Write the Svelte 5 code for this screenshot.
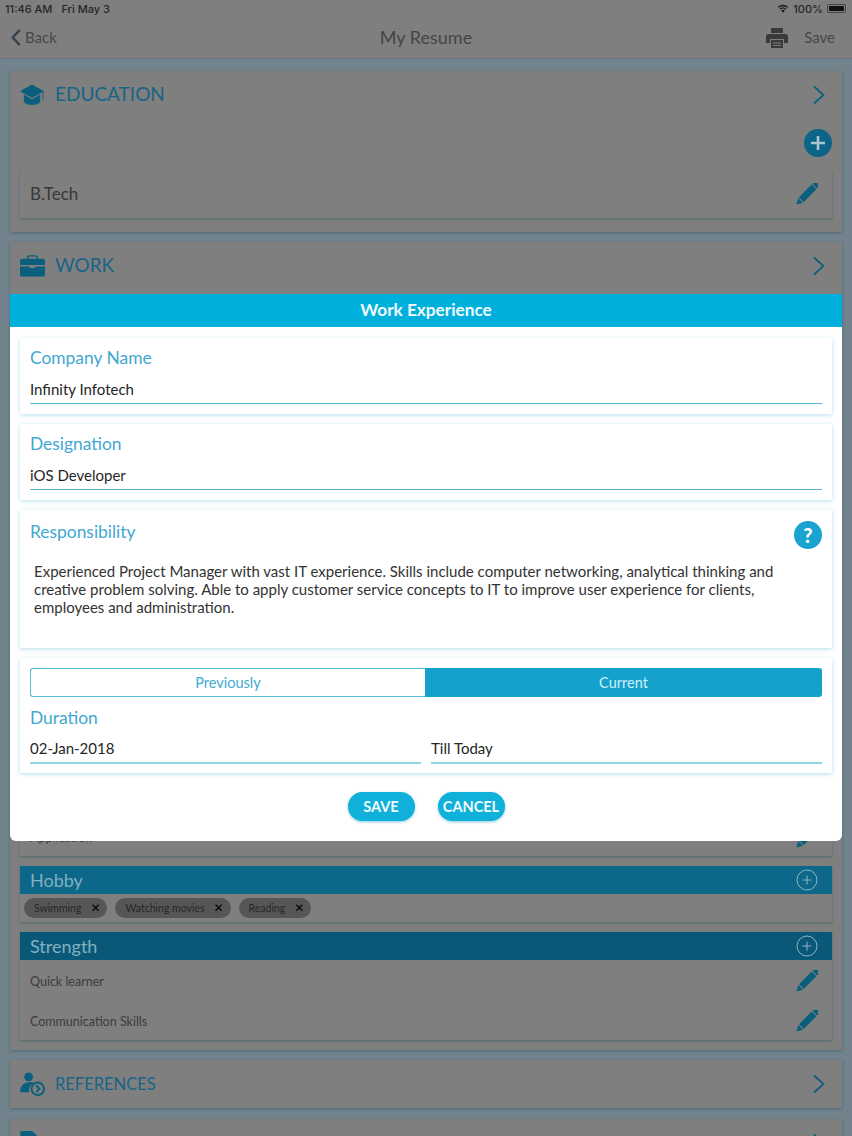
<script>
  const hobbies = ['Swimming', 'Watching movies', 'Reading'];
  const strengths = ['Quick learner', 'Communication Skills'];
</script>

{#snippet pencil()}
  <svg class="pencil" viewBox="0 0 22 22" aria-hidden="true">
    <g transform="rotate(45 11 11)" fill="currentColor">
      <rect x="7.6" y="-4" width="6.8" height="4" rx="1.2" />
      <rect x="7.6" y="1" width="6.8" height="18" />
      <polygon points="7.6,20 14.4,20 11,26" />
    </g>
  </svg>
{/snippet}

{#snippet chevron()}
  <svg class="chev" viewBox="0 0 14 20" aria-hidden="true">
    <path d="M2 1.5 L11.5 10 L2 18.5" fill="none" stroke="currentColor" stroke-width="1.7" />
  </svg>
{/snippet}

{#snippet ringPlus()}
  <svg class="ringplus" viewBox="0 0 22 22" aria-hidden="true">
    <circle cx="11" cy="11" r="10" fill="none" stroke="currentColor" stroke-width="1" />
    <path d="M11 6.5v9M6.5 11h9" stroke="currentColor" stroke-width="1" />
  </svg>
{/snippet}

<div class="screen">
  <div class="backdrop">
    <header class="top">
      <div class="status">
        <span class="clock">11:46 AM</span><span>Fri May 3</span>
        <span class="status-right">
          <svg class="wifi" viewBox="0 0 14 10" aria-hidden="true">
            <path d="M7 10 L4.9 7.5 A3.2 3.2 0 0 1 9.1 7.5 Z" fill="currentColor" />
            <path d="M3.4 5.9 A5.4 5.4 0 0 1 10.6 5.9" fill="none" stroke="currentColor" stroke-width="1.5" />
            <path d="M1.4 3.7 A8.2 8.2 0 0 1 12.6 3.7" fill="none" stroke="currentColor" stroke-width="1.5" />
          </svg>
          <span>100%</span>
          <span class="battery"><i></i></span>
        </span>
      </div>
      <nav class="nav">
        <div class="back">
          <svg viewBox="0 0 12 20" aria-hidden="true">
            <path d="M10 2 L2.5 10 L10 18" fill="none" stroke="currentColor" stroke-width="2.4" />
          </svg>
          <span>Back</span>
        </div>
        <div class="title">My Resume</div>
        <div class="actions">
          <svg class="printer" viewBox="0 0 22 21" aria-hidden="true">
            <path fill="currentColor" d="M5 1h12v5H5zM2.5 7h17A2.5 2.5 0 0 1 22 9.5V16h-4v-4H4v4H0V9.5A2.5 2.5 0 0 1 2.5 7z" />
            <path fill="currentColor" d="M5 13h12v8H5z" />
            <path d="M7 16h8M7 18.4h8" stroke="#7f7f7f" stroke-width="1" />
          </svg>
          <span>Save</span>
        </div>
      </nav>
    </header>

    <main class="list">
      <section class="panel edu">
        <div class="panel-head">
          <svg class="sec-icon" viewBox="0 0 26 22" aria-hidden="true">
            <polygon points="12.5,0 25,7 12.5,14 0,7" fill="currentColor" />
            <path d="M4 10.5 L12.5 15.5 L21 10.5 V18 C18 22.5 7 22.5 4 18 Z" fill="currentColor" />
            <path d="M24 8 V16" stroke="currentColor" stroke-width="1" />
          </svg>
          <h2>EDUCATION</h2>
          {@render chevron()}
        </div>
        <div class="add-row">
          <svg class="add" viewBox="0 0 28 28" aria-hidden="true">
            <circle cx="14" cy="14" r="14" fill="#0c6586" />
            <path d="M14 7v14M7 14h14" stroke="#a9c4cf" stroke-width="2.6" />
          </svg>
        </div>
        <div class="row-card">
          <span class="btech">B.Tech</span>
          {@render pencil()}
        </div>
      </section>

      <section class="panel work">
        <div class="panel-head">
          <svg class="sec-icon" viewBox="0 0 26 22" aria-hidden="true">
            <path d="M8 4V2.2C8 1 9 .5 10 .5h6c1 0 2 .5 2 1.7V4" fill="none" stroke="currentColor" stroke-width="1.4" />
            <path d="M2 3.5h22a2 2 0 0 1 2 2V10H0V5.500a2 2 0 0 1 2-2z" fill="currentColor" />
            <path d="M0 11.500h10v1.500h6v-1.500h10V20a2 2 0 0 1-2 2H2a2 2 0 0 1-2-2z" fill="currentColor" />
          </svg>
          <h2>WORK</h2>
          {@render chevron()}
        </div>

        <div class="tag-card hidden-row">
          <div class="row"><span>Application</span>{@render pencil()}</div>
        </div>

        <div class="tag-card">
          <div class="strip hobby"><span>Hobby</span>{@render ringPlus()}</div>
          <div class="chips">
            {#each hobbies as hobby}
              <span class="chip">{hobby}<b aria-hidden="true">✕</b></span>
            {/each}
          </div>
        </div>

        <div class="tag-card">
          <div class="strip strength"><span>Strength</span>{@render ringPlus()}</div>
          {#each strengths as item}
            <div class="row"><span>{item}</span>{@render pencil()}</div>
          {/each}
        </div>
      </section>

      <section class="panel refs">
        <div class="panel-head">
          <svg class="sec-icon person" viewBox="0 0 26 26" aria-hidden="true">
            <circle cx="9" cy="5" r="4.6" fill="currentColor" />
            <path d="M0 21C0 14 5 10.500 10 10.500c2 0 3.500.5 5 1.300C11 13 9 17 9.500 21z" fill="currentColor" />
            <circle cx="18.500" cy="17.500" r="6.500" fill="none" stroke="currentColor" stroke-width="2" />
            <path d="M16.800 14l3.500 3.500-3.500 3.500" fill="none" stroke="currentColor" stroke-width="2" />
          </svg>
          <h2 class="small">REFERENCES</h2>
          {@render chevron()}
        </div>
      </section>

      <section class="panel decl">
        <div class="panel-head">
          <svg class="sec-icon doc" viewBox="0 0 20 26" aria-hidden="true">
            <path d="M0 0h13l7 7v19H0z" fill="currentColor" />
          </svg>
          <h2 class="small">DECLARATION</h2>
          {@render chevron()}
        </div>
      </section>
    </main>
  </div>

  <div class="modal" role="dialog" aria-label="Work Experience">
    <div class="modal-head">Work Experience</div>
    <div class="modal-body">
      <div class="field-card">
        <label class="lbl" for="company">Company Name</label>
        <div id="company" class="value">Infinity Infotech</div>
      </div>
      <div class="field-card">
        <label class="lbl" for="designation">Designation</label>
        <div id="designation" class="value">iOS Developer</div>
      </div>
      <div class="field-card resp">
        <div class="resp-head">
          <span class="lbl">Responsibility</span>
          <span class="help">?</span>
        </div>
        <p>Experienced Project Manager with vast IT experience. Skills include computer networking, analytical thinking and creative problem solving. Able to apply customer service concepts to IT to improve user experience for clients, employees and administration.</p>
      </div>
      <div class="field-card duration">
        <div class="segment">
          <span class="seg-off">Previously</span>
          <span class="seg-on">Current</span>
        </div>
        <div class="lbl dur-label">Duration</div>
        <div class="dates">
          <div class="value thick">02-Jan-2018</div>
          <div class="value thick">Till Today</div>
        </div>
      </div>
    </div>
    <div class="buttons">
      <button type="button">SAVE</button>
      <button type="button">CANCEL</button>
    </div>
  </div>
</div>

<style>
  :global(body) {
    margin: 0;
    background: #6f7f88;
  }
  .screen {
    position: relative;
    width: 852px;
    height: 1136px;
    overflow: hidden;
    font-family: Lato, "Open Sans", sans-serif;
  }

  /* Dimmed page behind the dialog: colours are the scrimmed values */
  .backdrop {
    height: 1136px;
    background: #72838d;
    color: #4b4b4b;
  }
  .top {
    height: 59px;
    background: #7f7f7f;
    border-bottom: 1px solid #6d7478;
    box-sizing: border-box;
  }
  .status {
    display: flex;
    align-items: center;
    height: 17px;
    padding: 0 6px 0 5px;
    font: 500 11px Inter, "Liberation Sans", sans-serif;
    color: #262626;
  }
  .clock {
    margin-right: 9px;
  }
  .status-right {
    margin-left: auto;
    display: flex;
    align-items: center;
    gap: 4px;
  }
  .wifi {
    width: 12px;
    height: 9px;
    color: #1a1a1a;
  }
  .battery {
    width: 19px;
    height: 9px;
    border: 1px solid #444;
    border-radius: 2px;
    box-sizing: border-box;
    padding: 1px;
    display: flex;
  }
  .battery i {
    flex: 1;
    background: #111;
    border-radius: 1px;
  }
  .nav {
    display: grid;
    grid-template-columns: 1fr auto 1fr;
    align-items: center;
    height: 40px;
    padding: 0 10px;
  }
  .back {
    display: flex;
    align-items: center;
    gap: 3px;
    font-size: 15px;
    color: #474747;
  }
  .back svg {
    width: 12px;
    height: 19px;
    color: #35424b;
  }
  .title {
    font-size: 18px;
    color: #454545;
  }
  .actions {
    display: flex;
    align-items: center;
    justify-content: flex-end;
    gap: 16px;
    margin-right: 7px;
    font-size: 15px;
    color: #474747;
  }
  .printer {
    width: 22px;
    height: 21px;
    color: #3a3a3a;
  }

  .list {
    display: flex;
    flex-direction: column;
    gap: 10px;
    padding: 12px 10px 0;
  }
  .panel {
    background: #7f7f7f;
    box-shadow: 0 1px 3px rgba(30, 60, 80, 0.4);
    padding: 0 10px;
  }
  .panel-head {
    display: flex;
    align-items: center;
    gap: 10px;
    height: 48px;
  }
  .panel-head h2 {
    margin: -3px 0 0;
    font-size: 19px;
    font-weight: 400;
    color: #186486;
  }
  .panel-head h2.small {
    margin-top: -1px;
    font-size: 16.5px;
  }
  .sec-icon {
    width: 25px;
    height: 22px;
    color: #0b5f7e;
    flex: none;
  }
  .person {
    height: 25px;
    margin-top: 1px;
  }
  .doc {
    width: 19px;
    height: 24px;
  }
  .chev {
    width: 14px;
    height: 20px;
    margin-left: auto;
    margin-right: 6px;
    color: #0d5f7c;
  }
  .edu {
    height: 161px;
    box-sizing: border-box;
  }
  .add-row {
    display: flex;
    justify-content: flex-end;
    margin-top: 10px;
  }
  .add {
    width: 28px;
    height: 28px;
    display: block;
  }
  .row-card {
    display: flex;
    align-items: center;
    justify-content: space-between;
    height: 46px;
    margin-top: 15px;
    padding: 0 14px 0 10px;
    box-sizing: border-box;
    box-shadow: 0 1px 2px rgba(30, 90, 100, 0.5);
    background: #7f7f7f;
  }
  .btech {
    margin-top: -3px;
    font-size: 17px;
    color: #383838;
  }
  .pencil {
    width: 22px;
    height: 22px;
    color: #0b5f7e;
    flex: none;
  }
  .row-card .pencil {
    margin-top: -2px;
  }
  .work {
    height: 808px;
    box-sizing: border-box;
    display: flex;
    flex-direction: column;
    gap: 10px;
  }
  .hidden-row {
    margin-top: 516px;
  }
  .tag-card {
    box-shadow: 0 1px 2px rgba(30, 90, 100, 0.5);
  }
  .strip {
    display: flex;
    align-items: center;
    justify-content: space-between;
    height: 28px;
    padding: 0 14px 0 10px;
    font-size: 18px;
    color: #83b0c0;
  }
  .strip span {
    margin-top: -1px;
  }
  .hobby {
    background: #0c6788;
  }
  .strength {
    background: #0a5878;
  }
  .ringplus {
    width: 22px;
    height: 22px;
    color: #8db5c3;
  }
  .chips {
    display: flex;
    gap: 8px;
    padding: 4px;
    height: 20px;
  }
  .chip {
    display: flex;
    align-items: center;
    justify-content: space-between;
    gap: 9px;
    height: 20px;
    padding: 0 7px 0 10px;
    border-radius: 10px;
    background: #565656;
    color: #262626;
    font-size: 10.5px;
  }
  .chip b {
    color: #000;
    font-size: 12px;
    font-family: "DejaVu Sans", sans-serif;
  }
  .row {
    display: flex;
    align-items: center;
    justify-content: space-between;
    height: 40px;
    padding: 2px 14px 0 10px;
    box-sizing: border-box;
    font-size: 12.5px;
    color: #3c3c3c;
  }

  .refs {
    height: 48px;
  }
  .decl {
    height: 48px;
    margin-top: 1px;
  }

  /* Dialog */
  .modal {
    position: absolute;
    left: 10px;
    top: 294px;
    width: 832px;
    height: 547px;
    background: #fff;
    border-radius: 0 0 6px 6px;
    overflow: hidden;
    display: flex;
    flex-direction: column;
  }
  .modal-head {
    height: 33px;
    line-height: 32px;
    text-align: center;
    background: #00b0dc;
    color: #f2fbfe;
    font-size: 17.2px;
    font-weight: 700;
  }
  .modal-body {
    display: flex;
    flex-direction: column;
    gap: 10px;
    padding: 11px 10px 0;
  }
  .field-card {
    box-sizing: border-box;
    height: 76px;
    padding: 10px 10px 0;
    background: #fff;
    box-shadow: 0 1px 4px rgba(40, 160, 205, 0.35);
  }
  .lbl {
    display: block;
    height: 20px;
    line-height: 20px;
    font-size: 17.4px;
    color: #3fa8d0;
  }
  .value {
    margin-top: 10px;
    height: 26px;
    line-height: 22px;
    box-sizing: border-box;
    border-bottom: 1px solid #58b6d8;
    font-size: 15px;
    color: #262626;
  }
  .resp {
    height: 138px;
    padding-top: 12px;
  }
  .resp-head {
    display: flex;
    justify-content: space-between;
  }
  .help {
    width: 28px;
    height: 28px;
    margin-top: -1px;
    border-radius: 50%;
    background: #1aa3d0;
    color: #fff;
    font-size: 20px;
    font-weight: 900;
    line-height: 28px;
    text-align: center;
  }
  .resp p {
    margin: 13px 0 0 4px;
    width: 760px;
    font-size: 15px;
    line-height: 18px;
    color: #333;
  }
  .duration {
    height: 115px;
  }
  .segment {
    display: grid;
    grid-template-columns: 395px 397px;
    height: 29px;
    line-height: 27px;
    font-size: 14.5px;
    text-align: center;
  }
  .seg-off {
    box-sizing: border-box;
    border: 1px solid #58b8d8;
    border-right: 0;
    border-radius: 3px 0 0 3px;
    color: #43aacf;
  }
  .seg-on {
    background: #14a2cd;
    color: #d2eff8;
    border-radius: 0 3px 3px 0;
    line-height: 29px;
  }
  .dur-label {
    margin-top: 11px;
  }
  .dates {
    display: grid;
    grid-template-columns: 1fr 1fr;
    gap: 10px;
  }
  .thick {
    margin-top: 9px;
    border-bottom: 2px solid #93d3e6;
    height: 27px;
  }
  .buttons {
    display: flex;
    justify-content: center;
    gap: 23px;
    margin-top: 19px;
  }
  .buttons button {
    width: 67px;
    height: 29px;
    padding: 0;
    border: 0;
    border-radius: 15px;
    background: #0fb0d9;
    color: #f4fcff;
    font: 700 14.5px Lato, sans-serif;
    box-shadow: 0 1px 3px rgba(20, 150, 200, 0.5);
  }
</style>
